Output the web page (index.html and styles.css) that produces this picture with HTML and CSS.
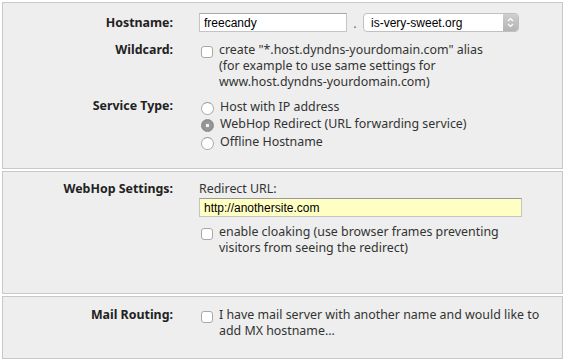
FILE: index.html
```html
<!DOCTYPE html>
<html>
  <head>
    <title>Hostname Settings</title>
    <link rel="stylesheet" href="styles.css">
  </head>
  <body>
    <div class="form-container">
      <!-- Host section -->
      <div class="panel panel-host">
        <div class="row row-hostname">
          <div class="field-label">Hostname:</div>
          <div class="field-value hostname-fields">
            <input type="text" class="text-input host-input" value="freecandy" />
            <span class="domain-dot">.</span>
            <div class="select-box">
              <span class="select-text">is-very-sweet.org</span>
              <span class="select-stepper">
                <svg width="7" height="11" viewBox="0 0 7 11">
                  <path d="M1 4 L3.5 1.5 L6 4" fill="none" stroke="#fff" stroke-width="1.2"/>
                  <path d="M1 7 L3.5 9.5 L6 7" fill="none" stroke="#fff" stroke-width="1.2"/>
                </svg>
              </span>
            </div>
          </div>
        </div>

        <div class="row row-wildcard">
          <div class="field-label">Wildcard:</div>
          <div class="field-value">
            <label class="check-option">
              <span class="checkbox"></span>
              <span class="option-text">create "*.host.dyndns-yourdomain.com" alias<br>(for example to use same settings for<br>www.host.dyndns-yourdomain.com)</span>
            </label>
          </div>
        </div>

        <div class="row row-service">
          <div class="field-label">Service Type:</div>
          <div class="field-value radio-list">
            <label class="radio-option"><span class="radio"></span>Host with IP address</label>
            <label class="radio-option"><span class="radio checked"></span>WebHop Redirect (URL forwarding service)</label>
            <label class="radio-option"><span class="radio"></span>Offline Hostname</label>
          </div>
        </div>
      </div>

      <!-- WebHop section -->
      <div class="panel panel-webhop">
        <div class="row">
          <div class="field-label">WebHop Settings:</div>
          <div class="field-value">
            <div class="sub-label">Redirect URL:</div>
            <input type="text" class="text-input url-input" value="http://anothersite.com" />
            <label class="check-option cloak-option">
              <span class="checkbox"></span>
              <span class="option-text">enable cloaking (use browser frames preventing<br>visitors from seeing the redirect)</span>
            </label>
          </div>
        </div>
      </div>

      <!-- Mail section -->
      <div class="panel panel-mail">
        <div class="row">
          <div class="field-label">Mail Routing:</div>
          <div class="field-value">
            <label class="check-option">
              <span class="checkbox"></span>
              <span class="option-text">I have mail server with another name and would like to<br>add MX hostname...</span>
            </label>
          </div>
        </div>
      </div>
    </div>
  </body>
</html>
```

FILE: styles.css
```css
:root {
  --panel-bg: #eeeeee;
  --panel-border: #c8c8c8;
  --label-width: 170px;
  --text-color: #333;
}

* {
  margin: 0;
  padding: 0;
  box-sizing: border-box;
}

body {
  font-family: "Noto Sans", "DejaVu Sans", sans-serif;
  font-size: 12.4px;
  color: var(--text-color);
  background: #fff;
  padding: 2px 2px 0 2px;
}

/* Layout */
.form-container {
  display: flex;
  flex-direction: column;
  gap: 2px;
  width: 561px;
}

.panel {
  background: var(--panel-bg);
  border: 1px solid var(--panel-border);
  display: flex;
  flex-direction: column;
}

.panel-host {
  height: 167px;
  padding-top: 10px;
}

.panel-webhop {
  height: 123px;
  padding-top: 9px;
}

.panel-mail {
  height: 63px;
  padding-top: 10px;
}

.row {
  display: flex;
  gap: 26px;
  line-height: 16px;
}

.field-label {
  width: var(--label-width);
  flex: none;
  text-align: right;
  font-weight: bold;
  color: #222;
}

.field-value {
  flex: 1;
  min-width: 0;
}

/* Hostname row */
.row-hostname {
  align-items: center;
}

.hostname-fields {
  display: flex;
  align-items: center;
}

.text-input {
  font-family: "Liberation Sans", Arial, sans-serif;
  font-size: 12px;
  color: #000;
  height: 19px;
  padding: 0 4px;
  background: #fff;
  border: 1px solid #c4c4c4;
  border-top-color: #a8a8a8;
  outline: none;
}

.host-input {
  width: 148px;
}

.domain-dot {
  width: 16px;
  text-align: center;
  color: #666;
  padding-top: 3px;
}

.select-box {
  width: 156px;
  height: 19px;
  display: flex;
  align-items: center;
  background: #fff;
  border: 1px solid #c0c0c0;
  border-radius: 4px;
  overflow: hidden;
  font-family: "Liberation Sans", Arial, sans-serif;
  font-size: 12px;
  color: #000;
}

.select-text {
  flex: 1;
  padding-left: 7px;
}

.select-stepper {
  width: 15px;
  height: 100%;
  display: flex;
  align-items: center;
  justify-content: center;
  background: linear-gradient(#cfcfcf, #b4b4b4);
}

/* Checkboxes */
.row-wildcard {
  margin-top: 10px;
}

.check-option {
  display: flex;
  gap: 6px;
  padding-left: 2px;
}

.checkbox {
  flex: none;
  width: 12px;
  height: 12px;
  margin-top: 4px;
  background: #fff;
  border: 1px solid #a9a9a9;
  border-radius: 3px;
}

/* Radios */
.row-service {
  margin-top: 8px;
}

.radio-list {
  display: flex;
  flex-direction: column;
}

.radio-option {
  display: flex;
  align-items: center;
  gap: 6px;
  padding-left: 2px;
  height: 17.5px;
}

.radio {
  flex: none;
  width: 13px;
  height: 13px;
  margin-top: 3px;
  border-radius: 50%;
  background: #fff;
  border: 1px solid #aaa;
  border-top-color: #999;
}

.radio.checked {
  background: radial-gradient(circle, #f4f4f4 0 1.5px, #9a9a9a 2px, #8c8c8c 100%);
  border-color: #888;
}

/* WebHop */
.sub-label {
  color: var(--text-color);
}

.url-input {
  display: block;
  width: 323px;
  margin-top: 1px;
  background: #ffffc4;
  border-top-color: #999;
}

.cloak-option {
  margin-top: 7px;
}
```
